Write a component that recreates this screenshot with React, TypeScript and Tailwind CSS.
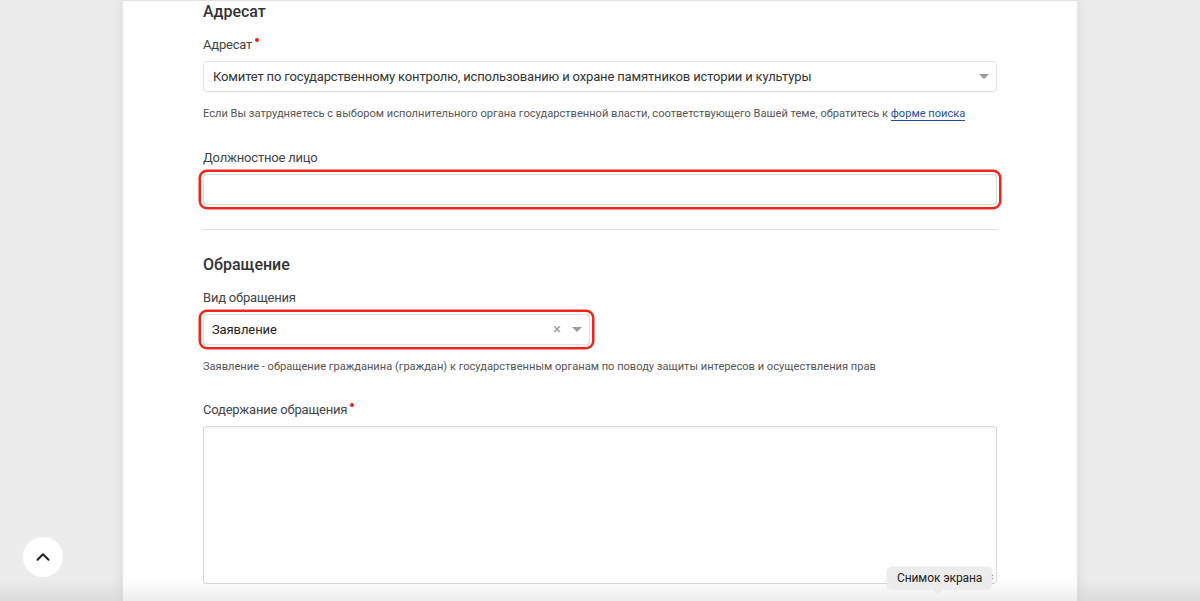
import { ChevronUp } from "lucide-react";

const Label = ({ text, required }: { text: string; required?: boolean }) => (
  <div className="h-5 text-[13px] leading-5 tracking-[-0.2px] text-[#444]">
    {text}
    {required && (
      <span className="relative -top-[7px] ml-[3px] inline-block h-[4px] w-[4px] rounded-full bg-[#e3261b]" />
    )}
  </div>
);

const Caret = () => (
  <span className="h-0 w-0 border-x-[5px] border-t-[5px] border-x-transparent border-t-[#9a9a9a]" />
);

const App = () => {
  return (
    <div className="relative h-[601px] w-full overflow-hidden bg-[#ececec] font-['Roboto',sans-serif]">
      <div className="mx-auto h-full w-[954px] border-t border-[#e2e2e2] bg-white px-[80px] shadow-[0_0_14px_rgba(0,0,0,0.08)]">
        {/* Адресат */}
        <h2 className="h-[22px] text-[16px] font-medium leading-[22px] text-[#333]">Адресат</h2>

        <div className="mt-[12px]">
          <Label text="Адресат" required />
        </div>
        <div className="mt-[6px] flex h-[31px] items-center justify-between rounded-[4px] border border-[#e3e3e3] pl-[9px] pr-[7px] shadow-[0_1px_2px_rgba(0,0,0,0.04)]">
          <span className="text-[13px] tracking-[-0.15px] text-[#333]">
            Комитет по государственному контролю, использованию и охране памятников истории и культуры
          </span>
          <Caret />
        </div>
        <p className="mt-[14px] h-4 text-[11.1px] leading-4 text-[#555]">
          Если Вы затрудняетесь с выбором исполнительного органа государственной власти, соответствующего Вашей теме,
          обратитесь к{" "}
          <a className="border-b border-[#1d4f9e] text-[#1d4f9e]" href="#">
            форме поиска
          </a>
        </p>

        <div className="mt-[26px]">
          <Label text="Должностное лицо" />
        </div>
        <div className="mt-[6px] h-[31px] rounded-[4px] border border-[#d9d9d9] shadow-[0_0_0_2px_white,0_0_0_4.5px_#f0261a]" />

        <div className="mt-[24px] h-px bg-[#dedede]" />

        {/* Обращение */}
        <h2 className="mt-[24px] h-[22px] text-[16px] font-medium leading-[22px] text-[#333]">Обращение</h2>

        <div className="mt-[12px]">
          <Label text="Вид обращения" />
        </div>
        <div className="mt-[6px] flex h-[31px] w-[387px] items-center justify-between rounded-[4px] border border-[#e0e0e0] pl-[8px] pr-[7px] shadow-[0_0_0_2px_white,0_0_0_4.5px_#f0261a]">
          <span className="text-[13px] tracking-[-0.1px] text-[#222]">Заявление</span>
          <div className="flex items-center gap-[11px]">
            <span className="text-[15px] leading-none text-[#9a9a9a]">×</span>
            <Caret />
          </div>
        </div>
        <p className="mt-[14px] h-4 text-[11.1px] leading-4 text-[#555]">
          Заявление - обращение гражданина (граждан) к государственным органам по поводу защиты интересов и
          осуществления прав
        </p>

        <div className="mt-[25px]">
          <Label text="Содержание обращения" required />
        </div>
        <div className="relative mt-[6px] h-[158px] rounded-[3px] border border-[#d9d9d9] shadow-[inset_0_1px_2px_rgba(0,0,0,0.05)]">
          <svg className="absolute bottom-[2px] right-[2px]" width="7" height="7" viewBox="0 0 7 7">
            <path d="M6 1 L1 6 M6 4 L4 6" stroke="#888" strokeWidth="1" />
          </svg>
        </div>
      </div>

      {/* bottom fade */}
      <div className="pointer-events-none absolute bottom-0 left-0 h-[22px] w-full bg-gradient-to-b from-transparent to-[rgba(0,0,0,0.07)]" />

      {/* scroll-up button */}
      <button className="absolute left-[23px] top-[537px] flex h-10 w-10 items-center justify-center rounded-full bg-white">
        <ChevronUp size={22} strokeWidth={2.2} className="text-[#222]" />
      </button>

      {/* tooltip */}
      <div className="absolute left-[887px] top-[567px]">
        <div className="rounded-[5px] bg-[#ececec] px-[10px] py-[3px] text-[12px] leading-[16px] tracking-[-0.1px] text-[#222] shadow-[0_0_2px_rgba(0,0,0,0.12)]">
          Снимок экрана
        </div>
        <div className="ml-[45px] h-0 w-0 border-x-[6px] border-t-[6px] border-x-transparent border-t-[#ececec]" />
      </div>
    </div>
  );
};

export default App;
